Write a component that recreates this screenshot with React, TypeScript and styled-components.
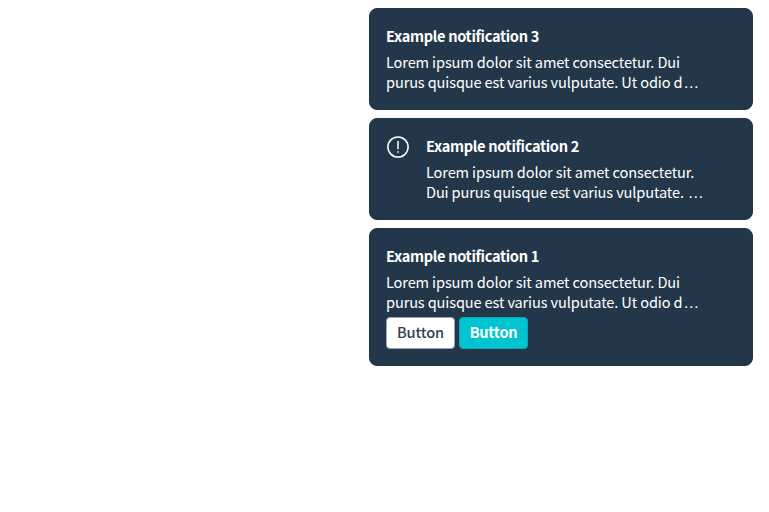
import React from "react";
import styled, { createGlobalStyle } from "styled-components";

const GlobalStyle = createGlobalStyle`
  body {
    margin: 0;
    background: #fff;
    font-family: "Noto Sans CJK SC", "Noto Sans", sans-serif;
    font-size: 14.6px;
    letter-spacing: -0.14px;
  }
`;

const Stack = styled.div`
  box-sizing: border-box;
  width: 416px;
  margin-left: auto;
  padding: 8px 16px;
  display: flex;
  flex-direction: column;
  gap: 8px;
`;

const Card = styled.section`
  box-sizing: border-box;
  display: flex;
  gap: 16px;
  min-height: 102px;
  padding: 16px;
  border: 1px solid #1f3649;
  border-radius: 8px;
  background: #24374a;
  color: #fff;
`;

const IconBox = styled.div`
  flex: none;
  width: 24px;
  height: 24px;
`;

const Content = styled.div`
  display: flex;
  flex-direction: column;
`;

const Title = styled.h2`
  margin: 1px 0 6px;
  font-size: 14.6px;
  font-weight: 700;
  line-height: 20px;
  letter-spacing: -0.33px;
`;

const Description = styled.p`
  margin: 0;
  height: 40px;
  line-height: 20px;
  white-space: nowrap;
`;

const Ellipsis = styled.span`
  margin-left: 0.7px;
  font-family: "Liberation Sans", sans-serif;
  font-size: 16px;
  line-height: 1;
`;

const Actions = styled.div`
  display: flex;
  gap: 4px;
  margin-top: 5px;
`;

const Button = styled.button<{ $primary?: boolean }>`
  box-sizing: border-box;
  width: 69px;
  height: 32px;
  padding: 0 0 2px;
  border: 1px solid ${(p) => (p.$primary ? "#08a7b5" : "#8fa8c0")};
  border-radius: 4px;
  background: ${(p) => (p.$primary ? "#00c4d0" : "#fff")};
  color: ${(p) => (p.$primary ? "#fff" : "#2f424f")};
  font-family: inherit;
  font-size: 14.6px;
  letter-spacing: ${(p) => (p.$primary ? -0.3 : -0.14)}px;
  font-weight: ${(p) => (p.$primary ? 700 : 500)};
  line-height: 20px;
`;

const AlertIcon = () => (
  <svg width="24" height="24" viewBox="0 0 24 24" fill="none" stroke="#fff">
    <circle cx="12" cy="12" r="10.1" strokeWidth="1.5" />
    <path d="M12 6v8.2M12 16.2v1.6" strokeWidth="1.5" />
  </svg>
);

interface NotificationProps {
  title: string;
  lines: [string, string];
  icon?: React.ReactNode;
  children?: React.ReactNode;
}

const Notification = ({ title, lines, icon, children }: NotificationProps) => (
  <Card>
    {icon && <IconBox>{icon}</IconBox>}
    <Content>
      <Title>{title}</Title>
      <Description>
        {lines[0]}
        <br />
        {lines[1]}
        <Ellipsis>…</Ellipsis>
      </Description>
      {children}
    </Content>
  </Card>
);

const wide: [string, string] = [
  "Lorem ipsum dolor sit amet consectetur. Dui",
  "purus quisque est varius vulputate. Ut odio d",
];

const narrow: [string, string] = [
  "Lorem ipsum dolor sit amet consectetur.",
  "Dui purus quisque est varius vulputate. ",
];

export default function App() {
  return (
    <>
      <GlobalStyle />
      <Stack>
        <Notification title="Example notification 3" lines={wide} />
        <Notification title="Example notification 2" lines={narrow} icon={<AlertIcon />} />
        <Notification title="Example notification 1" lines={wide}>
          <Actions>
            <Button>Button</Button>
            <Button $primary>Button</Button>
          </Actions>
        </Notification>
      </Stack>
    </>
  );
}
